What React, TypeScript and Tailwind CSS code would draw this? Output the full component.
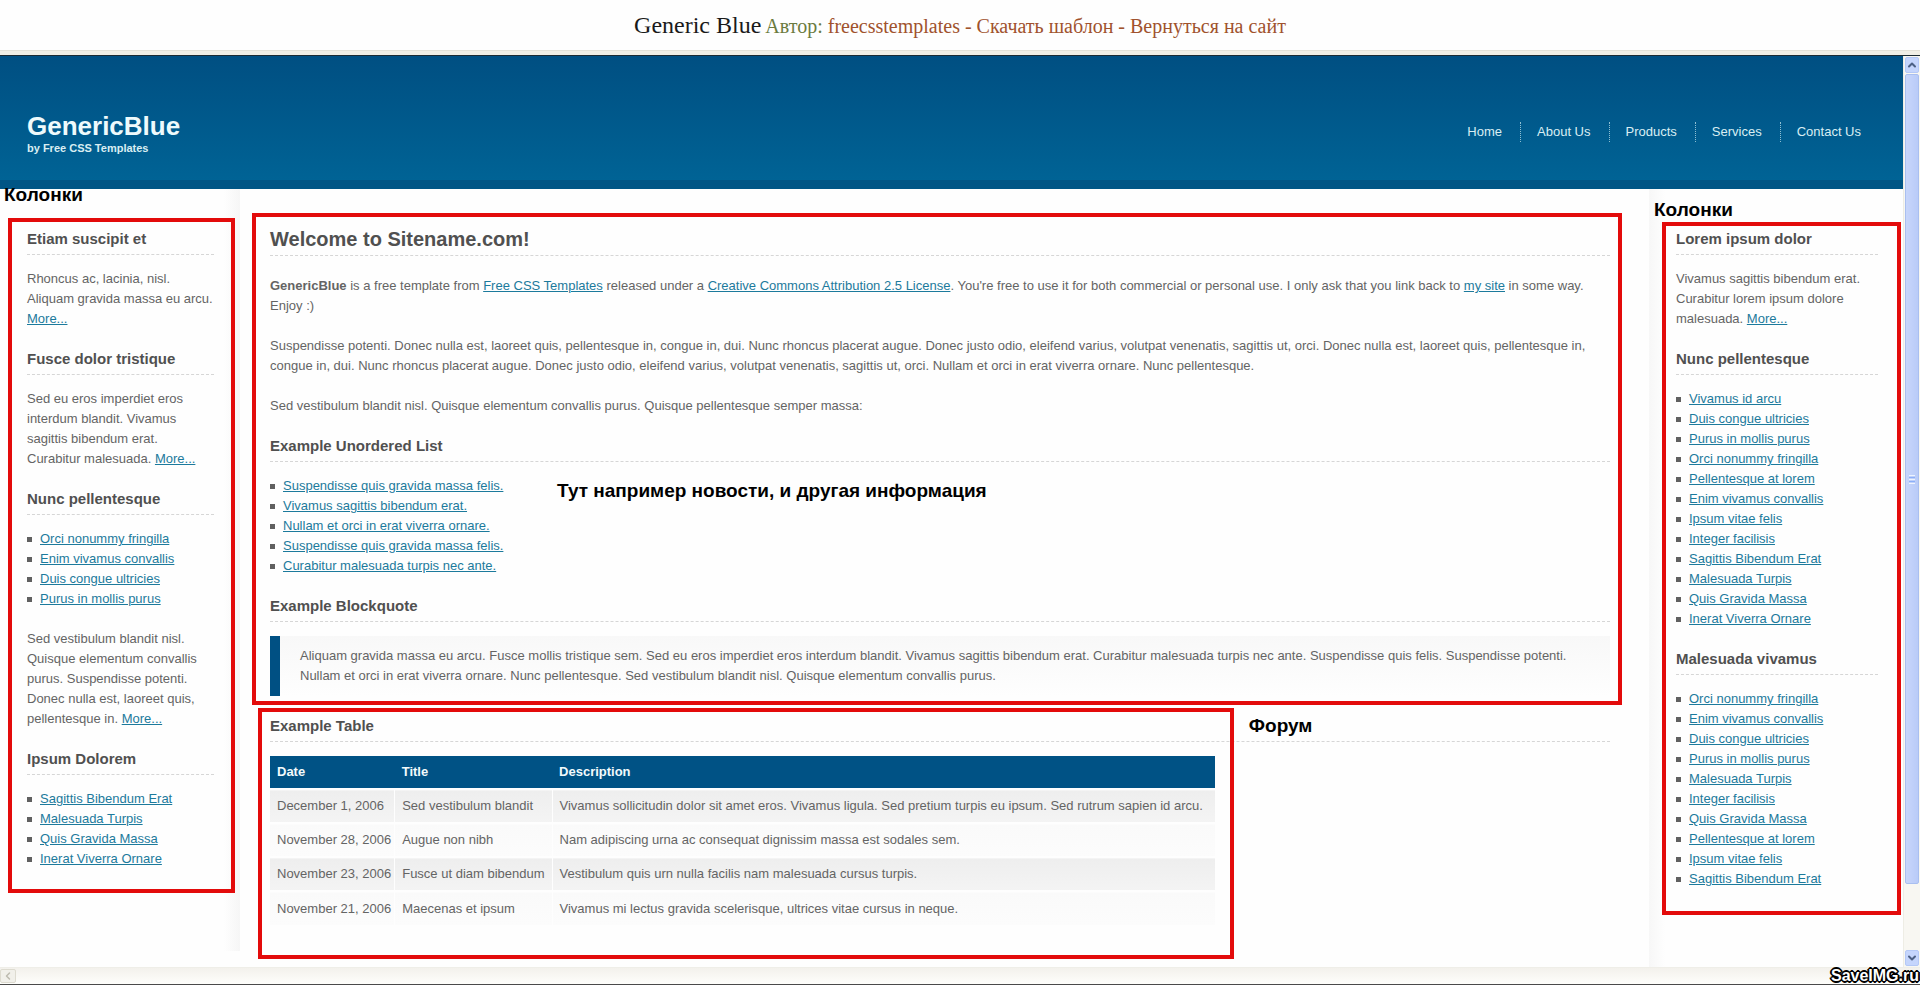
import React from "react";
import { ChevronDown, ChevronLeft, ChevronUp } from "lucide-react";

const navItems = ["Home", "About Us", "Products", "Services", "Contact Us"];

const leftLinks = ["Orci nonummy fringilla", "Enim vivamus convallis", "Duis congue ultricies", "Purus in mollis purus"];
const leftBottomLinks = ["Sagittis Bibendum Erat", "Malesuada Turpis", "Quis Gravida Massa", "Inerat Viverra Ornare"];
const exampleLinks = [
  "Suspendisse quis gravida massa felis.",
  "Vivamus sagittis bibendum erat.",
  "Nullam et orci in erat viverra ornare.",
  "Suspendisse quis gravida massa felis.",
  "Curabitur malesuada turpis nec ante.",
];
const rightLinks = [
  "Vivamus id arcu",
  "Duis congue ultricies",
  "Purus in mollis purus",
  "Orci nonummy fringilla",
  "Pellentesque at lorem",
  "Enim vivamus convallis",
  "Ipsum vitae felis",
  "Integer facilisis",
  "Sagittis Bibendum Erat",
  "Malesuada Turpis",
  "Quis Gravida Massa",
  "Inerat Viverra Ornare",
];
const rightBottomLinks = [
  "Orci nonummy fringilla",
  "Enim vivamus convallis",
  "Duis congue ultricies",
  "Purus in mollis purus",
  "Malesuada Turpis",
  "Integer facilisis",
  "Quis Gravida Massa",
  "Pellentesque at lorem",
  "Ipsum vitae felis",
  "Sagittis Bibendum Erat",
];

const rows = [
  ["December 1, 2006", "Sed vestibulum blandit", "Vivamus sollicitudin dolor sit amet eros. Vivamus ligula. Sed pretium turpis eu ipsum. Sed rutrum sapien id arcu."],
  ["November 28, 2006", "Augue non nibh", "Nam adipiscing urna ac consequat dignissim massa est sodales sem."],
  ["November 23, 2006", "Fusce ut diam bibendum", "Vestibulum quis urn nulla facilis nam malesuada cursus turpis."],
  ["November 21, 2006", "Maecenas et ipsum", "Vivamus mi lectus gravida scelerisque, ultrices vitae cursus in neque."],
];

function TextLink({ children }: { children: React.ReactNode }) {
  return (
    <a href="#" className="text-[#1c7a9c] underline">
      {children}
    </a>
  );
}

function Heading({ children }: { children: React.ReactNode }) {
  return (
    <h3 className="mb-[14px] border-b border-dashed border-[#d6d6d6] pb-[5px] text-[15px] leading-5 font-bold text-[#505050]">
      {children}
    </h3>
  );
}

function LinkList({ items }: { items: string[] }) {
  return (
    <ul>
      {items.map((item, i) => (
        <li key={i} className="flex items-center gap-2 whitespace-nowrap">
          <span className="size-[5px] bg-[#606060]" />
          <TextLink>{item}</TextLink>
        </li>
      ))}
    </ul>
  );
}

function Note({ className, children }: { className: string; children: React.ReactNode }) {
  return (
    <strong className={`absolute text-[19px] leading-5 font-bold whitespace-nowrap text-black ${className}`}>{children}</strong>
  );
}

function Frame({ className }: { className: string }) {
  return <div className={`pointer-events-none absolute border-4 border-[#e30b0b] ${className}`} />;
}

export default function App() {
  return (
    <div className="flex min-h-screen flex-col bg-[#fefefe] font-['Liberation_Sans',Arial,sans-serif] text-[13px] leading-5 text-[#646464]">
      <div className="flex h-[50px] items-baseline justify-center gap-1 pt-[11px] font-['Liberation_Serif','Times_New_Roman',serif] text-[20px] leading-7 whitespace-nowrap text-[#a0522d]">
        <h1 className="text-[24px] text-[#1a1a1a]">Generic Blue</h1>
        <p>
          <span className="text-[#6b7b3f]">Автор:</span> <a href="#">freecsstemplates</a> - <a href="#">Скачать шаблон</a> -{" "}
          <a href="#">Вернуться на сайт</a>
        </p>
      </div>
      <div className="h-[6px] border-t border-b border-t-[#e4e2d8] border-b-[#1c2b33] bg-[#f1efe6]" />

      <div className="flex flex-1">
        <div className="flex min-w-0 flex-1 flex-col">
          <header className="flex h-[133px] items-start justify-between border-b-[9px] border-[#005585] bg-linear-to-b from-[#004f82] to-[#006395] pr-[42px] pl-[27px] text-[#d9eef3]">
            <div className="pt-14">
              <h2 className="text-[26px] leading-7 font-bold text-[#eefafc]">GenericBlue</h2>
              <p className="text-[11px] leading-4 font-bold">by Free CSS Templates</p>
            </div>
            <nav className="pt-[66px]">
              <ul className="flex">
                {navItems.map((item) => (
                  <li
                    key={item}
                    className="border-l border-dotted border-[#8fbfd2] pr-[18px] pl-4 first:border-l-0 last:pr-0"
                  >
                    <a href="#">{item}</a>
                  </li>
                ))}
              </ul>
            </nav>
          </header>

          <div className="flex flex-1">
            <aside className="relative flex w-60 shrink-0">
              <div className="flex-1 pt-10 pl-[27px]">
                <section className="mb-5">
                  <Heading>Etiam suscipit et</Heading>
                  <p>
                    Rhoncus ac, lacinia, nisl. Aliquam gravida massa eu arcu. <TextLink>More...</TextLink>
                  </p>
                </section>
                <section className="mb-5">
                  <Heading>Fusce dolor tristique</Heading>
                  <p>
                    Sed eu eros imperdiet eros interdum blandit. Vivamus sagittis bibendum erat. Curabitur malesuada.{" "}
                    <TextLink>More...</TextLink>
                  </p>
                </section>
                <section className="mb-5">
                  <Heading>Nunc pellentesque</Heading>
                  <LinkList items={leftLinks} />
                  <p className="mt-5">
                    Sed vestibulum blandit nisl. Quisque elementum convallis purus. Suspendisse potenti. Donec nulla est,
                    laoreet quis, pellentesque in. <TextLink>More...</TextLink>
                  </p>
                </section>
                <section>
                  <Heading>Ipsum Dolorem</Heading>
                  <LinkList items={leftBottomLinks} />
                </section>
              </div>
              <div className="mb-4 ml-[10px] w-4 bg-linear-to-r from-[#fefefe] to-[#f6f6f6]" />
              <Note className="-top-1 left-1">Колонки</Note>
              <Frame className="top-[29px] right-[5px] left-2 h-[675px]" />
            </aside>

            <main className="min-w-0 flex-1 pt-10 pr-[39px] pl-[30px]">
              <div className="relative mb-5">
                <h2 className="mb-5 border-b border-dashed border-[#d6d6d6] pb-[6px] text-[20px] leading-5 font-bold text-[#505050]">
                  Welcome to Sitename.com!
                </h2>
                <p className="mb-5">
                  <strong>GenericBlue</strong> is a free template from <TextLink>Free CSS Templates</TextLink> released under
                  a <TextLink>Creative Commons Attribution 2.5 License</TextLink>. You're free to use it for both commercial
                  or personal use. I only ask that you link back to <TextLink>my site</TextLink> in some way. Enjoy :)
                </p>
                <p className="mb-5">
                  Suspendisse potenti. Donec nulla est, laoreet quis, pellentesque in, congue in, dui. Nunc rhoncus placerat
                  augue. Donec justo odio, eleifend varius, volutpat venenatis, sagittis ut, orci. Donec nulla est, laoreet
                  quis, pellentesque in, congue in, dui. Nunc rhoncus placerat augue. Donec justo odio, eleifend varius,
                  volutpat venenatis, sagittis ut, orci. Nullam et orci in erat viverra ornare. Nunc pellentesque.
                </p>
                <p className="mb-5">
                  Sed vestibulum blandit nisl. Quisque elementum convallis purus. Quisque pellentesque semper massa:
                </p>
                <Heading>Example Unordered List</Heading>
                <div className="relative mb-5">
                  <LinkList items={exampleLinks} />
                  <Note className="top-[5px] left-[287px]">Тут например новости, и другая информация</Note>
                </div>
                <Heading>Example Blockquote</Heading>
                <blockquote className="border-l-[10px] border-[#005083] bg-linear-to-b from-[#f8f8f8] to-[#fefefe] py-[10px] pr-5 pl-5">
                  Aliquam gravida massa eu arcu. Fusce mollis tristique sem. Sed eu eros imperdiet eros interdum blandit.
                  Vivamus sagittis bibendum erat. Curabitur malesuada turpis nec ante. Suspendisse quis felis. Suspendisse
                  potenti. Nullam et orci in erat viverra ornare. Nunc pellentesque. Sed vestibulum blandit nisl. Quisque
                  elementum convallis purus.
                </blockquote>
                <Frame className="-top-4 -right-3 -bottom-[9px] -left-[18px]" />
              </div>

              <Heading>Example Table</Heading>
              <div className="relative w-fit">
                <table className="text-left whitespace-nowrap">
                  <thead className="h-[33px] bg-[#005285] text-[#f2fafc]">
                    <tr>
                      <th className="pr-[3px] pl-[7px]">Date</th>
                      <th className="px-[7px]">Title</th>
                      <th className="pr-3 pl-[7px]">Description</th>
                    </tr>
                  </thead>
                  <tbody>
                    {rows.map((row) => (
                      <tr
                        key={row[0]}
                        className="h-[34px] border-t-2 border-[#fefefe] bg-linear-to-b from-[#fafafa] to-[#fcfcfc] odd:from-[#eeeeee] odd:to-[#f4f4f4]"
                      >
                        {row.map((cell) => (
                          <td
                            key={cell}
                            className="border-r border-[#fefefe] pr-[7px] pl-[7px] first:pr-[3px] last:border-r-0 last:pr-3"
                          >
                            {cell}
                          </td>
                        ))}
                      </tr>
                    ))}
                  </tbody>
                </table>
                <Frame className="-top-12 -right-[19px] -bottom-[34px] -left-3" />
                <Note className="-top-10 left-full ml-[34px]">Форум</Note>
              </div>
            </main>

            <aside className="relative flex w-[254px] shrink-0">
              <div className="w-4 bg-linear-to-r from-[#f7f7f7] to-[#fefefe]" />
              <div className="flex-1 pt-10 pr-[25px] pl-[11px]">
                <section className="mb-5">
                  <Heading>Lorem ipsum dolor</Heading>
                  <p>
                    Vivamus sagittis bibendum erat. Curabitur lorem ipsum dolore malesuada. <TextLink>More...</TextLink>
                  </p>
                </section>
                <section className="mb-5">
                  <Heading>Nunc pellentesque</Heading>
                  <LinkList items={rightLinks} />
                </section>
                <section>
                  <Heading>Malesuada vivamus</Heading>
                  <LinkList items={rightBottomLinks} />
                </section>
              </div>
              <Note className="top-[11px] left-[5px]">Колонки</Note>
              <Frame className="top-[33px] right-[2px] left-[13px] h-[693px]" />
            </aside>
          </div>
        </div>

        <div className="flex w-[17px] shrink-0 flex-col border-l border-[#eeede5] bg-[#f8f7f2] px-px">
          <button
            aria-label="Scroll up"
            className="mt-px flex h-4 items-center justify-center rounded-xs border border-[#b4c8f6] bg-[#c5d5fc] text-[#4d6185]"
          >
            <ChevronUp className="size-3" strokeWidth={4} />
          </button>
          <div className="mt-px flex flex-[811] flex-col items-center justify-center gap-px rounded-xs border border-[#a9bff0] bg-linear-to-r from-[#c8d6fb] to-[#b9cbf8]">
            <span className="h-px w-[6px] bg-[#eef4fe]" />
            <span className="h-px w-[6px] bg-[#8cb0f8]" />
            <span className="h-px w-[6px] bg-[#eef4fe]" />
            <span className="h-px w-[6px] bg-[#8cb0f8]" />
            <span className="h-px w-[6px] bg-[#eef4fe]" />
          </div>
          <div className="flex-[66]" />
          <button
            aria-label="Scroll down"
            className="mb-px flex h-4 items-center justify-center rounded-xs border border-[#b4c8f6] bg-[#c5d5fc] text-[#4d6185]"
          >
            <ChevronDown className="size-3" strokeWidth={4} />
          </button>
        </div>
      </div>

      <div className="relative flex h-[18px] items-center border-t border-b border-t-[#efeee8] border-b-[#4a4a4a] bg-linear-to-b from-[#f3f1ec] to-[#fefefb]">
        <button
          aria-label="Scroll left"
          className="flex h-[14px] w-4 items-center justify-center rounded-xs border border-[#dddbd0] bg-[#f1f0ea] text-[#bdbbb0]"
        >
          <ChevronLeft className="size-3" strokeWidth={3} />
        </button>
        <span className="absolute right-px bottom-0 text-[16px] leading-4 font-bold text-white [text-shadow:-1px_-1px_0_#000,1px_-1px_0_#000,-1px_1px_0_#000,1px_1px_0_#000,0_2px_0_#000,0_-2px_0_#000,2px_0_0_#000,-2px_0_0_#000]">
          SaveIMG.ru
        </span>
      </div>
    </div>
  );
}
